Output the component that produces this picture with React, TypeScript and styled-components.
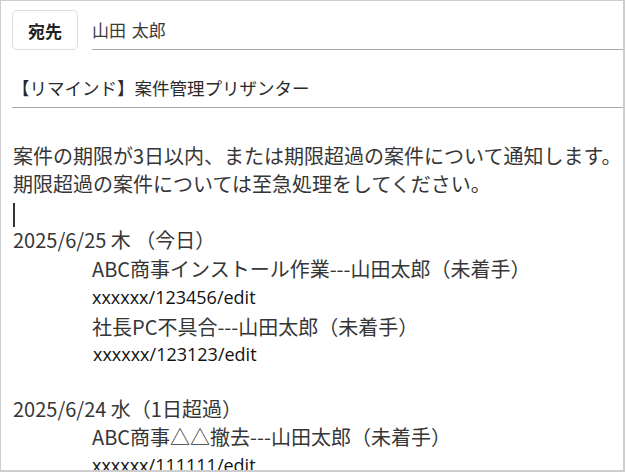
import React from "react";
import styled, { createGlobalStyle } from "styled-components";

const GlobalStyle = createGlobalStyle`
  html, body { margin: 0; padding: 0; background: #ffffff; }
  body { font-family: "Noto Sans CJK JP", "Noto Sans", sans-serif; }
`;

const Frame = styled.div`
  box-sizing: border-box;
  width: 625px;
  height: 472px;
  border-style: solid;
  border-color: #cdcdcd;
  border-width: 1px 2px 2px 1px;
  overflow: hidden;
  display: flex;
  flex-direction: column;
  background: #fff;
  color: #333;
`;

const HeaderRow = styled.div`
  display: flex;
  align-items: stretch;
  gap: 14px;
  padding: 9px 0 0 11px;
`;

const ToButton = styled.div`
  box-sizing: border-box;
  width: 66px;
  height: 40px;
  border: 1px solid #dcdcdc;
  border-radius: 5px;
  display: flex;
  align-items: center;
  justify-content: center;
  font-weight: 700;
  font-size: 17px;
  color: #222;
`;

const RecipientField = styled.div`
  flex: 1;
  box-sizing: border-box;
  height: 40px;
  border-bottom: 1.5px solid #a8a8a8;
  display: flex;
  align-items: center;
  font-size: 17px;
  color: #3a3a3a;
  padding-left: 0;
  word-spacing: 2px;
`;

const SubjectRow = styled.div`
  margin-left: 11px;
  padding: 24px 0 5px;
  line-height: 28px;
  font-size: 17.5px;
  color: #2a2a2a;
  border-bottom: 1.5px solid #a8a8a8;
`;

const Body = styled.div`
  padding: 34px 0 0 12px;
  font-size: 20px;
  color: #363636;
`;

const Line = styled.div<{ $indent?: number; $h?: number }>`
  height: ${(p) => p.$h ?? 28}px;
  line-height: ${(p) => p.$h ?? 28}px;
  padding-left: ${(p) => p.$indent ?? 0}px;
  white-space: pre;
`;

const UrlLine = styled(Line)`
  font-family: "Open Sans", "Liberation Sans", sans-serif;
  font-size: 18px;
  color: #111;
`;

const Caret = styled.span`
  display: inline-block;
  width: 1.5px;
  height: 24px;
  background: #333;
  vertical-align: middle;
`;

export default function App() {
  return (
    <>
      <GlobalStyle />
      <Frame>
        <HeaderRow>
          <ToButton>宛先</ToButton>
          <RecipientField>山田 太郎</RecipientField>
        </HeaderRow>
        <SubjectRow>【リマインド】案件管理プリザンター</SubjectRow>
        <Body>
          <Line>案件の期限が3日以内、または期限超過の案件について通知します。</Line>
          <Line>期限超過の案件については至急処理をしてください。</Line>
          <Line>
            <Caret />
          </Line>
          <Line>2025/6/25 木 （今日）</Line>
          <Line $indent={79} $h={29}>ABC商事インストール作業---山田太郎（未着手）</Line>
          <UrlLine $indent={79} $h={29}>xxxxxx/123456/edit</UrlLine>
          <Line $indent={79} $h={29}>社長PC不具合---山田太郎（未着手）</Line>
          <UrlLine $indent={80} $h={26}>xxxxxx/123123/edit</UrlLine>
          <Line> </Line>
          <Line>2025/6/24 水（1日超過）</Line>
          <Line $indent={79}>ABC商事△△撤去---山田太郎（未着手）</Line>
          <UrlLine $indent={79}>xxxxxx/111111/edit</UrlLine>
        </Body>
      </Frame>
    </>
  );
}
